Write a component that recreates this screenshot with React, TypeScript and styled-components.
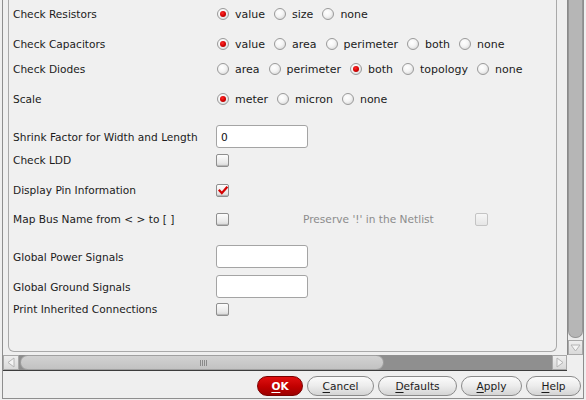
import React from "react";
import styled, { createGlobalStyle, css } from "styled-components";

const Global = createGlobalStyle`
  html, body { margin: 0; padding: 0; background: #efefef; }
  body { font-family: "DejaVu Sans", "Liberation Sans", sans-serif; font-size: 10.6px; color: #1b1b1b; }
  #root { width: 586px; height: 400px; overflow: hidden; }
`;

const Frame = styled.div`
  margin-left: 2px;
  width: 580px;
  height: 398px;
  border: 1px solid #8e8e8e;
  border-top: none;
  background: #efefef;
  display: flex;
  flex-direction: column;
`;

const ScrollGrid = styled.div`
  display: grid;
  grid-template-columns: 1fr 16px;
  grid-template-rows: 355px 16px;
`;

const Viewport = styled.div`
  overflow: hidden;
  display: flex;
  padding: 0 10px 3px 5px;
`;

const Panel = styled.div`
  flex: 1;
  border: 1px solid #a9a9a9;
  border-top: none;
  border-radius: 0 0 6px 6px;
  background: #f0f0f0;
  padding-left: 4px;
  display: flex;
  flex-direction: column;
`;

const Row = styled.div<{ $mt: number; $h?: number }>`
  display: grid;
  grid-template-columns: 203px 1fr;
  grid-template-rows: ${(p) => p.$h ?? 20}px;
  align-items: center;
  height: ${(p) => p.$h ?? 20}px;
  margin-top: ${(p) => p.$mt}px;
`;

const Label = styled.div`
  white-space: nowrap;
`;

const Controls = styled.div<{ $indent?: number }>`
  display: flex;
  align-items: center;
  padding-left: ${(p) => p.$indent ?? 0}px;
`;

const RadioItem = styled.label`
  display: flex;
  align-items: center;
  gap: 6px;
  margin-right: 9px;
  white-space: nowrap;
  font-size: 11px;
`;

const RadioCircle = styled.span<{ $on?: boolean }>`
  width: 10px;
  height: 10px;
  border-radius: 50%;
  border: 1px solid #9a9a9a;
  background: radial-gradient(circle at 40% 35%, #ffffff 0%, #f4f4f4 45%, #cdcdcd 100%);
  display: flex;
  align-items: center;
  justify-content: center;
  &::after {
    content: "";
    display: ${(p) => (p.$on ? "block" : "none")};
    width: 6px;
    height: 6px;
    border-radius: 50%;
    background: radial-gradient(circle at 40% 35%, #ff2a2a 0%, #d00000 55%, #900000 100%);
  }
`;

const CheckBox = styled.span<{ $disabled?: boolean }>`
  width: 11px;
  height: 11px;
  border: 1px solid ${(p) => (p.$disabled ? "#c4c4c4" : "#8f8f8f")};
  border-radius: 2px;
  background: ${(p) =>
    p.$disabled
      ? "linear-gradient(#f6f6f6, #e6e6e6)"
      : "linear-gradient(#fdfdfd, #e9e9e9 70%, #d6d6d6)"};
  box-shadow: ${(p) => (p.$disabled ? "none" : "inset 0 -1px 0 #b8b8b8")};
  display: flex;
  align-items: center;
  justify-content: center;
  flex: none;
`;

const TextInput = styled.div`
  width: 92px;
  height: 23px;
  box-sizing: border-box;
  border: 1px solid #a4a4a4;
  border-radius: 3px;
  background: #ffffff;
  display: flex;
  align-items: center;
  padding-left: 4px;
  color: #111;
`;

const DisabledText = styled.span`
  color: #8c8c8c;
  margin-left: 74px;
  white-space: nowrap;
`;

const Spacer = styled.span<{ $w: number }>`
  width: ${(p) => p.$w}px;
  flex: none;
`;

const VScroll = styled.div`
  display: flex;
  flex-direction: column;
  border-left: 1px solid #8a8a8a;
  background: #ececec;
`;

const VThumb = styled.div`
  flex: 1;
  background: #b6b6b6;
  border: 1px solid #969696;
  border-top: none;
  border-radius: 0 0 7px 7px;
  margin-bottom: 2px;
`;

const ArrowBtn = styled.div<{ $w?: number }>`
  width: ${(p) => p.$w ?? 15}px;
  height: 15px;
  flex: none;
  background: linear-gradient(#eeeeee, #d9d9d9);
  border: 1px solid #a8a8a8;
  box-sizing: border-box;
  display: flex;
  align-items: center;
  justify-content: center;
`;

const HScroll = styled.div`
  display: flex;
  background: #8f8f8f;
  border-bottom: 1px solid #3c3c3c;
`;

const HThumb = styled.div`
  width: 364px;
  margin-left: 1px;
  background: linear-gradient(#d2d2d2, #c2c2c2);
  border: 1px solid #a0a0a0;
  border-radius: 8px;
  box-sizing: border-box;
  display: flex;
  align-items: center;
  justify-content: center;
`;

const Grip = styled.span`
  width: 7px;
  height: 6px;
  background: repeating-linear-gradient(90deg, #8a8a8a 0 1px, transparent 1px 2px);
  margin-left: 2px;
`;

const HTrack = styled.div`
  flex: 1;
`;

const Corner = styled.div`
  background: #efefef;
`;

const ButtonBar = styled.div`
  flex: 1;
  display: flex;
  justify-content: flex-end;
  align-items: flex-start;
  gap: 4px;
  padding: 5px 2px 0 0;
`;

const Btn = styled.button<{ $w: number; $primary?: boolean }>`
  width: ${(p) => p.$w}px;
  height: 20px;
  border-radius: 10px;
  font-family: inherit;
  font-size: 10.6px;
  padding: 0;
  display: flex;
  align-items: center;
  justify-content: center;
  ${(p) =>
    p.$primary
      ? css`
          background: linear-gradient(#e01010, #c00000 55%, #9c0000);
          border: 1px solid #7a0000;
          color: #ffffff;
          font-weight: bold;
        `
      : css`
          background: linear-gradient(#fbfbfb, #ececec 50%, #d4d4d4);
          border: 1px solid #8a8a8a;
          color: #1b1b1b;
        `}
  u { text-decoration: underline; text-underline-offset: 2px; }
`;

const Radio = ({ label, on }: { label: string; on?: boolean }) => (
  <RadioItem>
    <RadioCircle $on={on} />
    {label}
  </RadioItem>
);

const Check = ({ checked, disabled }: { checked?: boolean; disabled?: boolean }) => (
  <CheckBox $disabled={disabled}>
    {checked && (
      <svg width="10" height="9" viewBox="0 0 10 9">
        <path d="M1.5 4.6 L3.8 7.2 L8.6 1.6" fill="none" stroke="#d40000" strokeWidth="2.2" strokeLinecap="square" />
      </svg>
    )}
  </CheckBox>
);

const Tri = ({ dir }: { dir: "left" | "right" | "down" }) => {
  const pts =
    dir === "left" ? "9,2 9,11 3,6.5" : dir === "right" ? "4,2 4,11 10,6.5" : "2,4 11,4 6.5,10";
  return (
    <svg width="13" height="13" viewBox="0 0 13 13">
      <polygon points={pts} fill="#f4f4f4" stroke="#b4b4b4" strokeWidth="1" />
    </svg>
  );
};

export default function App() {
  return (
    <>
      <Global />
      <Frame>
        <ScrollGrid>
          <Viewport>
            <Panel>
              <Row $mt={4}>
                <Label>Check Resistors</Label>
                <Controls $indent={1}>
                  <Radio label="value" on />
                  <Radio label="size" />
                  <Radio label="none" />
                </Controls>
              </Row>
              <Row $mt={10}>
                <Label>Check Capacitors</Label>
                <Controls $indent={1}>
                  <Radio label="value" on />
                  <Radio label="area" />
                  <Radio label="perimeter" />
                  <Radio label="both" />
                  <Radio label="none" />
                </Controls>
              </Row>
              <Row $mt={5}>
                <Label>Check Diodes</Label>
                <Controls $indent={1}>
                  <Radio label="area" />
                  <Radio label="perimeter" />
                  <Radio label="both" on />
                  <Radio label="topology" />
                  <Radio label="none" />
                </Controls>
              </Row>
              <Row $mt={10}>
                <Label>Scale</Label>
                <Controls $indent={1}>
                  <Radio label="meter" on />
                  <Radio label="micron" />
                  <Radio label="none" />
                </Controls>
              </Row>
              <Row $mt={16} $h={23}>
                <Label>Shrink Factor for Width and Length</Label>
                <Controls>
                  <TextInput>0</TextInput>
                </Controls>
              </Row>
              <Row $mt={2}>
                <Label>Check LDD</Label>
                <Controls>
                  <Check />
                </Controls>
              </Row>
              <Row $mt={10}>
                <Label>Display Pin Information</Label>
                <Controls>
                  <Check checked />
                </Controls>
              </Row>
              <Row $mt={9}>
                <Label>Map Bus Name from &lt; &gt; to [ ]</Label>
                <Controls>
                  <Check />
                  <DisabledText>Preserve '!' in the Netlist</DisabledText>
                  <Spacer $w={41} />
                  <Check disabled />
                </Controls>
              </Row>
              <Row $mt={16} $h={23}>
                <Label>Global Power Signals</Label>
                <Controls>
                  <TextInput />
                </Controls>
              </Row>
              <Row $mt={7} $h={23}>
                <Label>Global Ground Signals</Label>
                <Controls>
                  <TextInput />
                </Controls>
              </Row>
              <Row $mt={1}>
                <Label>Print Inherited Connections</Label>
                <Controls>
                  <Check />
                </Controls>
              </Row>
            </Panel>
          </Viewport>
          <VScroll>
            <VThumb />
            <ArrowBtn>
              <Tri dir="down" />
            </ArrowBtn>
          </VScroll>
          <HScroll>
            <ArrowBtn $w={16}>
              <Tri dir="left" />
            </ArrowBtn>
            <HThumb>
              <Grip />
            </HThumb>
            <HTrack />
            <ArrowBtn>
              <Tri dir="right" />
            </ArrowBtn>
          </HScroll>
          <Corner />
        </ScrollGrid>
        <ButtonBar>
          <Btn $w={46} $primary>
            <u>O</u>K
          </Btn>
          <Btn $w={67}>
            <u>C</u>ancel
          </Btn>
          <Btn $w={79}>
            <u>D</u>efaults
          </Btn>
          <Btn $w={61}>
            <u>A</u>pply
          </Btn>
          <Btn $w={55}>
            <u>H</u>elp
          </Btn>
        </ButtonBar>
      </Frame>
    </>
  );
}
